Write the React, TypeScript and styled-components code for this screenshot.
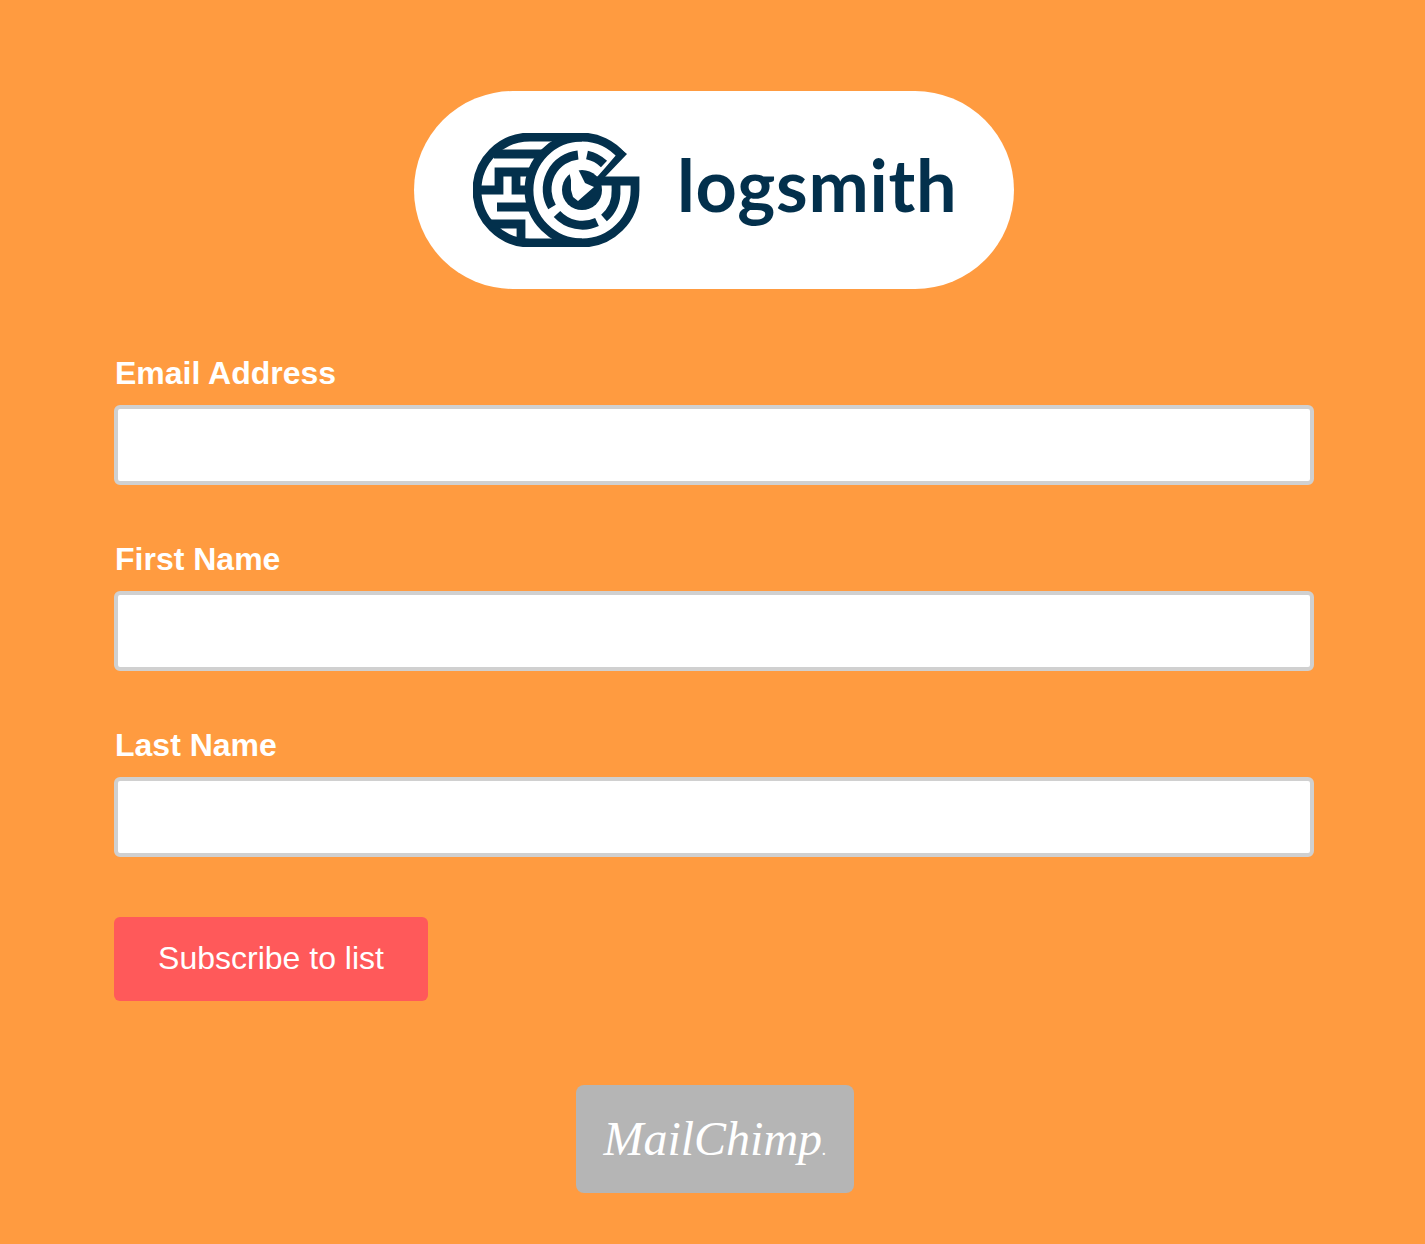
import React, { FC } from "react";
import styled, { createGlobalStyle } from "styled-components";

const GlobalStyle = createGlobalStyle`
    html, body {
        margin: 0;
        background: #ff9b40;
    }
`;

const fields = ["Email Address", "First Name", "Last Name"];

const LogoMark: FC = () => (
    <MarkSvg viewBox="473 133 167 114" fill="none" stroke="#03304c" strokeWidth="8.8">
        {/* body of the log and the G */}
        <path d="M596 181 H635 V190 A53 53 0 0 1 582 243 H530 A53 53 0 0 1 530 137 H582 A53 53 0 0 1 622 156" />
        <polygon points="627,154 605,177 597,177 605,168 617,154 622,150" fill="#03304c" stroke="none" />
        <path d="M582 137 A53 53 0 0 0 582 243" />
        {/* maze on the bark side */}
        <path d="M494 154 H542" />
        <path d="M477 190 H499 V172 H532" />
        <path d="M516 172 V190 H530" />
        <path d="M497 207 H532" />
        <path d="M491 224 H521 V242" />
        {/* rings */}
        <path d="M578 155 A34.5 34.5 0 0 0 552 207" />
        <path d="M587 155 A34.5 34.5 0 0 1 604 164" />
        <path d="M616 184 V190 A34.5 34.5 0 0 1 604 218" />
        <path d="M557 214 A34.5 34.5 0 0 0 597 222" />
        {/* centre disc with the bolt cut out of it */}
        <circle cx="582" cy="190" r="20" fill="#03304c" stroke="none" />
        <polygon points="569,171 577,167 585,183 594,187 578,201 573,197 571,190 571,180" fill="#fff" stroke="none" />
    </MarkSvg>
);

const App: FC = () => (
    <Page>
        <GlobalStyle />
        <LogoPill>
            <LogoMark />
            <Wordmark>logsmith</Wordmark>
        </LogoPill>
        <Form>
            {fields.map((name) => (
                <Field key={name}>
                    <Label>{name}</Label>
                    <Input type="text" />
                </Field>
            ))}
            <Submit type="button">Subscribe to list</Submit>
        </Form>
        <Badge>
            <BadgeText>MailChimp<BadgeDot>.</BadgeDot></BadgeText>
        </Badge>
    </Page>
);

export default App;

const Page = styled.div`
    width: 1200px;
    min-height: 1244px;
    box-sizing: border-box;
    margin-left: 114px;
    padding: 91px 0 51px;
    font-family: "Liberation Sans", Arial, sans-serif;
`;

const LogoPill = styled.div`
    display: flex;
    align-items: center;
    width: 600px;
    height: 198px;
    margin: 0 auto;
    padding-left: 59px;
    box-sizing: border-box;
    background: #fff;
    border-radius: 99px;
`;

const MarkSvg = styled.svg`
    width: 167px;
    height: 114px;
    flex: none;
`;

const Wordmark = styled.span`
    margin: 0 0 12px 37px;
    font-family: Lato, "Liberation Sans", sans-serif;
    font-weight: 700;
    font-size: 72px;
    line-height: 1;
    letter-spacing: 0.7px;
    color: #03304c;
`;

const Form = styled.form`
    display: flex;
    flex-direction: column;
    align-items: flex-start;
    margin-top: 65px;
`;

const Field = styled.div`
    width: 100%;
    margin-bottom: 55px;
`;

const Label = styled.label`
    display: block;
    margin-bottom: 13px;
    padding-left: 1px;
    font-size: 32px;
    font-weight: 700;
    line-height: 38px;
    color: #fff;
`;

const Input = styled.input`
    display: block;
    width: 100%;
    height: 80px;
    box-sizing: border-box;
    background: #fff;
    border: 4px solid #d0d0d0;
    border-radius: 6px;
    outline: none;
`;

const Submit = styled.button`
    width: 314px;
    height: 84px;
    margin-top: 5px;
    padding: 0 0 2px;
    background: #ff595a;
    border: none;
    border-radius: 6px;
    font-family: inherit;
    font-size: 32px;
    color: #fff;
`;

const Badge = styled.div`
    display: flex;
    align-items: center;
    justify-content: center;
    width: 278px;
    height: 108px;
    margin: 84px 0 0 462px;
    background: #b5b5b5;
    border-radius: 8px;
`;

const BadgeText = styled.span`
    font-family: "Liberation Serif", serif;
    font-style: italic;
    font-size: 48px;
    line-height: 1;
    color: #fff;
`;

const BadgeDot = styled.span`
    font-size: 18px;
`;
